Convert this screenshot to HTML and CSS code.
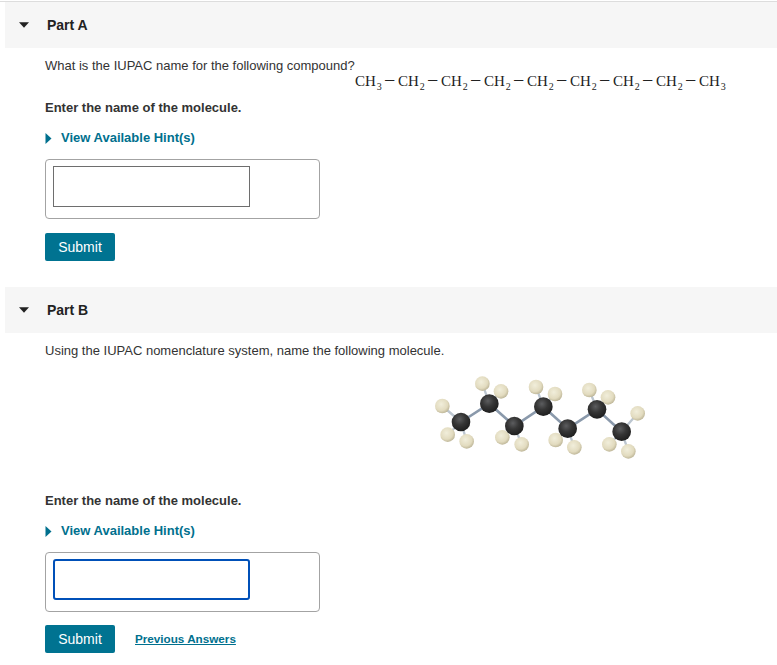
FILE: index.html
```html
<!DOCTYPE html>
<html lang="en">
<head>
<meta charset="utf-8">
<title>Parts</title>
<link rel="stylesheet" href="styles.css">
</head>
<body>
<section class="part part-a">
  <header class="part-head">
    <svg class="caret" width="10" height="6" viewBox="0 0 10 6"><path d="M0 .2h10L5 5.8z"/></svg>
    <h2>Part A</h2>
  </header>
  <div class="part-body">
    <p class="question">What is the IUPAC name for the following compound?</p>
    <div class="formula">
      <span>CH<sub>3</sub></span><i>−</i><span>CH<sub>2</sub></span><i>−</i><span>CH<sub>2</sub></span><i>−</i><span>CH<sub>2</sub></span><i>−</i><span>CH<sub>2</sub></span><i>−</i><span>CH<sub>2</sub></span><i>−</i><span>CH<sub>2</sub></span><i>−</i><span>CH<sub>2</sub></span><i>−</i><span>CH<sub>3</sub></span>
    </div>
    <p class="prompt prompt-a">Enter the name of the molecule.</p>
    <p class="hint"><svg width="7" height="11" viewBox="0 0 7 11"><path d="M.5 0l6 5.5-6 5.5z"/></svg><a>View Available Hint(s)</a></p>
    <div class="answer"><div class="field"></div></div>
    <div class="actions"><button class="submit">Submit</button></div>
  </div>
</section>
<section class="part part-b">
  <header class="part-head">
    <svg class="caret" width="10" height="6" viewBox="0 0 10 6"><path d="M0 .2h10L5 5.8z"/></svg>
    <h2>Part B</h2>
  </header>
  <div class="part-body">
    <p class="question">Using the IUPAC nomenclature system, name the following molecule.</p>
    <svg class="molecule" width="225" height="100" viewBox="0 0 675 300">
      <defs>
        <radialGradient id="c" cx=".42" cy=".35" r=".7"><stop offset="0" stop-color="#5c5d5f"/><stop offset=".45" stop-color="#363636"/><stop offset="1" stop-color="#1b1b1b"/></radialGradient>
        <radialGradient id="h" cx=".42" cy=".38" r=".72"><stop offset="0" stop-color="#f1eedb"/><stop offset=".6" stop-color="#e2dbbf"/><stop offset="1" stop-color="#aea687"/></radialGradient>
      </defs>
      <g class="bonds">
        <path d="M108 168L52 120M108 168L68 206M108 168L125 226M193 113L172 53M193 113L228 76M268 180L232 214M268 180L290 235M355 122L333 63M355 122L390 84M428 188L392 222M428 188L448 244M516 130L493 72M516 130L549 94M590 197L553 235M590 197L610 256M590 197L638 142"/>
        <path class="cc" d="M108 168L193 113L268 180L355 122L428 188L516 130L590 197"/>
      </g>
      <g fill="url(#h)">
        <circle cx="52" cy="120" r="22"/><circle cx="68" cy="206" r="22"/><circle cx="125" cy="226" r="22"/><circle cx="172" cy="53" r="22"/><circle cx="228" cy="76" r="22"/><circle cx="232" cy="214" r="22"/><circle cx="290" cy="235" r="22"/><circle cx="333" cy="63" r="22"/><circle cx="390" cy="84" r="22"/><circle cx="392" cy="222" r="22"/><circle cx="448" cy="244" r="22"/><circle cx="493" cy="72" r="22"/><circle cx="549" cy="94" r="22"/><circle cx="553" cy="235" r="22"/><circle cx="610" cy="256" r="22"/><circle cx="638" cy="142" r="22"/>
      </g>
      <g fill="url(#c)">
        <circle cx="108" cy="168" r="28"/><circle cx="193" cy="113" r="28"/><circle cx="268" cy="180" r="28"/><circle cx="355" cy="122" r="28"/><circle cx="428" cy="188" r="28"/><circle cx="516" cy="130" r="28"/><circle cx="590" cy="197" r="28"/>
      </g>
    </svg>
    <p class="prompt prompt-b">Enter the name of the molecule.</p>
    <p class="hint"><svg width="7" height="11" viewBox="0 0 7 11"><path d="M.5 0l6 5.5-6 5.5z"/></svg><a>View Available Hint(s)</a></p>
    <div class="answer"><div class="field focused"></div></div>
    <div class="actions actions-b"><button class="submit">Submit</button><a class="previous">Previous Answers</a></div>
  </div>
</section>
</body>
</html>
```
FILE: styles.css
```css
* { box-sizing: border-box; }
html, body { margin: 0; padding: 0; background: #fff; }
body {
  width: 777px;
  height: 665px;
  overflow: hidden;
  font-family: "Liberation Sans", Arial, sans-serif;
  font-size: 13px;
  color: #333;
  padding-top: 1px;
}
p, h2 { margin: 0; }
.part-a { border-top: 1px solid #ddd; }
.part-head {
  margin-left: 5px;
  height: 46px;
  background: #f6f6f6;
  display: flex;
  align-items: center;
  padding-left: 14px;
}
.caret { fill: #222; margin-right: 18px; }
h2 { font-size: 14px; font-weight: bold; color: #222; }
.part-body { padding-left: 45px; }
.question { line-height: 18px; }
.part-a .question { margin-top: 9px; }
.part-b .question { margin-top: 9px; }
.formula {
  display: flex;
  margin: -5px 0 0 310px;
  height: 22px;
  align-items: center;
  font-family: "Liberation Serif", "Times New Roman", serif;
  font-size: 15px;
  line-height: 22px;
  color: #222;
}
.formula span { width: 29px; white-space: nowrap; }
.formula sub { font-size: 10px; line-height: 0; margin-left: 1px; }
.formula i { width: 14px; text-align: left; font-size: 20px; font-style: normal; margin-top: -2px; }
.prompt { font-weight: bold; line-height: 18px; }
.prompt-a { margin-top: 7px; }
.prompt-b { margin-top: 26px; }
.hint {
  margin-top: 12px;
  line-height: 18px;
  display: flex;
  align-items: center;
  font-weight: bold;
  color: #00708e;
}
.hint svg { fill: #00708e; margin-right: 9px; }
.answer {
  margin-top: 12px;
  width: 275px;
  height: 60px;
  border: 1px solid #a3a3a3;
  border-radius: 4px;
  padding: 6px 7px;
}
.field {
  width: 197px;
  height: 41px;
  border: 1px solid #6e6e6e;
}
.field.focused { border: 2px solid #0050b8; border-radius: 3px; }
.actions { margin-top: 14px; display: flex; align-items: center; }
.actions-b { margin-top: 13px; }
.submit {
  width: 70px;
  height: 28px;
  padding: 0;
  border: 0;
  border-radius: 2px;
  background: #007391;
  color: #fff;
  font: 14px "Liberation Sans", Arial, sans-serif;
}
.previous {
  margin-left: 20px;
  margin-bottom: 2px;
  font-size: 11.7px;
  font-weight: bold;
  color: #00708e;
  text-decoration: underline;
}
.part-b { margin-top: 26px; }
.molecule { display: block; margin: 6px 0 0 380px; filter: blur(.3px); }
.bonds path { fill: none; stroke: #bcc6d0; stroke-width: 7; }
.bonds .cc { stroke: #8a99ab; stroke-width: 8; }
```
